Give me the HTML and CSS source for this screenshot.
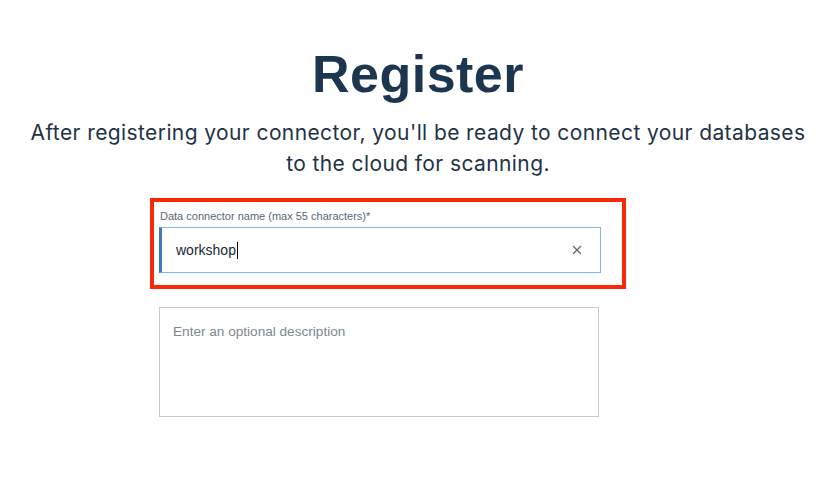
FILE: index.html
```html
<!DOCTYPE html>
<html>
<head>
<meta charset="utf-8">
<link rel="stylesheet" href="styles.css">
</head>
<body>
<main class="page">
  <h1 class="title">Register</h1>
  <p class="subtitle">After registering your connector, you'll be ready to connect your databases<br>to the cloud for scanning.</p>
  <form class="form">
    <div class="highlight">
      <label class="label">Data connector name (max 55 characters)*</label>
      <div class="field">
        <span class="value">workshop</span><span class="caret"></span>
        <svg class="clear" width="10" height="10" viewBox="0 0 10 10"><path d="M1 1L9 9M9 1L1 9" stroke="#5a6872" stroke-width="1.2" fill="none"/></svg>
      </div>
    </div>
    <div class="textarea">Enter an optional description</div>
  </form>
</main>
</body>
</html>
```
FILE: styles.css
```css
html, body {
  margin: 0;
  padding: 0;
  background: #ffffff;
}
.page {
  width: 836px;
  padding-top: 44px;
  font-family: "Liberation Sans", Arial, sans-serif;
}
.title {
  margin: 0;
  text-align: center;
  font-size: 52px;
  line-height: 60px;
  font-weight: 700;
  color: #1c3650;
  letter-spacing: 0.5px;
}
.subtitle {
  margin: 13px 0 0;
  text-align: center;
  font-family: Inter, "Liberation Sans", sans-serif;
  font-size: 21px;
  line-height: 31px;
  letter-spacing: 0.4px;
  color: #1f3347;
}
.form {
  margin-top: 19px;
  padding-left: 150px;
}
.highlight {
  width: 476px;
  box-sizing: border-box;
  border: 4px solid #fa2a09;
  padding: 7px 21px 12px 5px;
  display: flex;
  flex-direction: column;
  gap: 4px;
}
.label {
  font-size: 11px;
  line-height: 14px;
  color: #5a6872;
  padding-left: 1px;
}
.field {
  border: 1px solid #7cb6f5;
  border-left: 3px solid #4178be;
  display: flex;
  align-items: center;
  padding: 0 18px 0 14px;
  box-sizing: border-box;
  height: 46px;
}
.value {
  font-size: 14px;
  color: #152935;
}
.caret {
  width: 1px;
  height: 17px;
  background: #000;
  margin-left: 1px;
}
.clear {
  margin-left: auto;
}
.textarea {
  margin-top: 18px;
  margin-left: 9px;
  width: 440px;
  height: 110px;
  box-sizing: border-box;
  border: 1px solid #c9c9c9;
  padding: 16px 13px;
  font-size: 13.6px;
  line-height: 16px;
  color: #7d8891;
}
```
